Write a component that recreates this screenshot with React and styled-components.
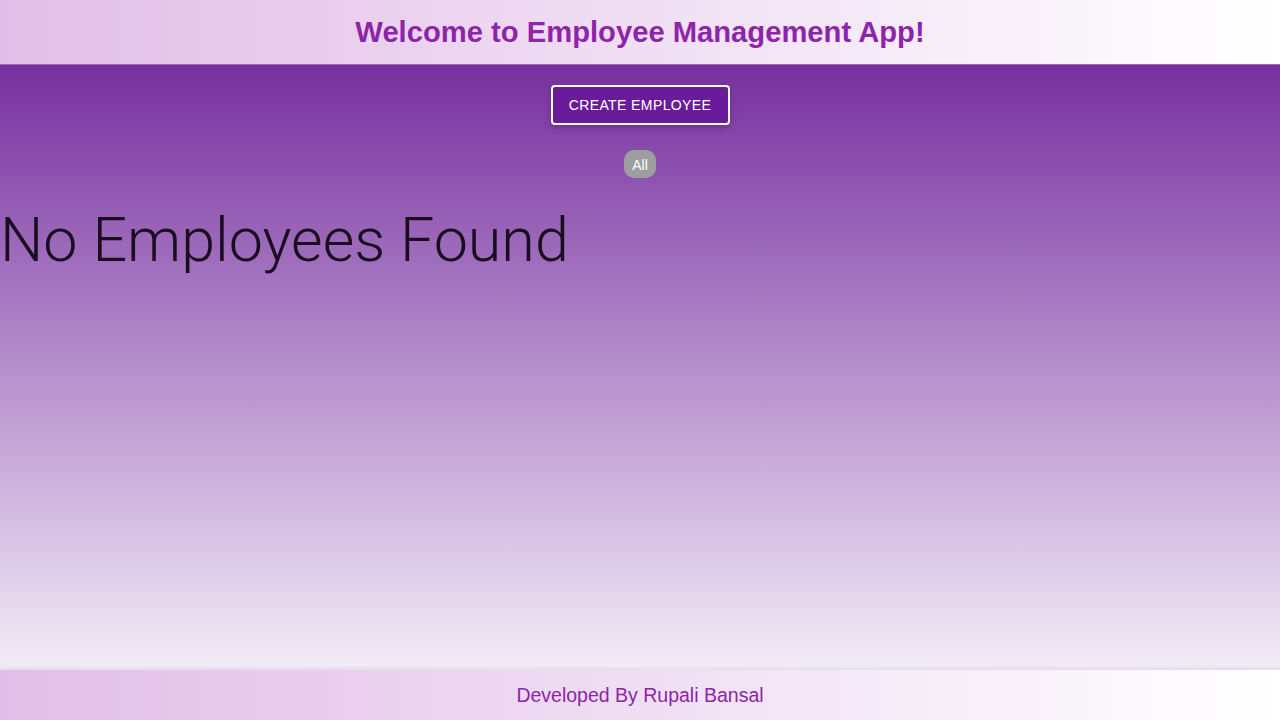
import React from 'react';
import styled, {createGlobalStyle} from 'styled-components';

const GlobalStyle = createGlobalStyle`
    html, body {
        margin: 0;
        padding: 0;
        height: 100%;
    }
    body {
        font-family: "Liberation Sans", Arial, sans-serif;
    }
    #root {
        height: 100%;
    }
`;

const Page = styled.div`
    display: flex;
    flex-direction: column;
    height: 720px;
`;

const Header = styled.header`
    height: 65px;
    display: flex;
    align-items: center;
    justify-content: center;
    padding-top: 1px;
    background: linear-gradient(to right, #e1bee7, #ffffff);
    border-bottom: 1px solid #9a6cb3;
    box-sizing: border-box;
`;

const Title = styled.h1`
    margin: 0;
    font-size: 29.2px;
    font-weight: 700;
    color: #8e24aa;
`;

const Main = styled.main`
    flex: 1;
    display: flex;
    flex-direction: column;
    background: linear-gradient(to bottom, #7730a0 0%, #f3edf7 100%);
`;

const Actions = styled.div`
    display: flex;
    justify-content: center;
    padding-top: 20px;
`;

const CreateButton = styled.button`
    width: 179px;
    height: 40px;
    border: 2px solid #ffffff;
    border-radius: 4px;
    background: #6a1b9a;
    color: #ffffff;
    font-family: "Liberation Sans", Arial, sans-serif;
    font-size: 14px;
    letter-spacing: 0.4px;
    text-transform: uppercase;
    cursor: pointer;
    box-shadow: 0 3px 6px rgba(60, 0, 90, 0.3);
`;

const Filters = styled.div`
    display: flex;
    justify-content: center;
    margin-top: 25px;
`;

const Chip = styled.span`
    display: inline-flex;
    align-items: center;
    justify-content: center;
    height: 28px;
    padding: 1px 8px 0;
    box-sizing: border-box;
    border-radius: 10px;
    background: ${props => props.active ? '#9e9e9e' : 'transparent'};
    color: #ffffff;
    font-size: 14px;
`;

const EmptyMessage = styled.h2`
    margin: 22px 0 0;
    font-family: Roboto, "Liberation Sans", sans-serif;
    font-weight: 300;
    font-size: 61px;
    line-height: 80px;
    color: #1a0d1f;
`;

const Footer = styled.footer`
    height: 50px;
    display: flex;
    align-items: center;
    justify-content: center;
    padding-top: 1px;
    box-sizing: border-box;
    background: linear-gradient(to right, #e1bee7, #ffffff);
    box-shadow: 0 -2px 4px rgba(0, 0, 0, 0.08);
    color: #8e24aa;
    font-size: 19.5px;
`;

const App = () => (
    <Page>
        <GlobalStyle/>
        <Header>
            <Title>Welcome to Employee Management App!</Title>
        </Header>
        <Main>
            <Actions>
                <CreateButton>Create Employee</CreateButton>
            </Actions>
            <Filters>
                <Chip active>All</Chip>
            </Filters>
            <EmptyMessage>No Employees Found</EmptyMessage>
        </Main>
        <Footer>Developed By Rupali Bansal</Footer>
    </Page>
);

export default App;
